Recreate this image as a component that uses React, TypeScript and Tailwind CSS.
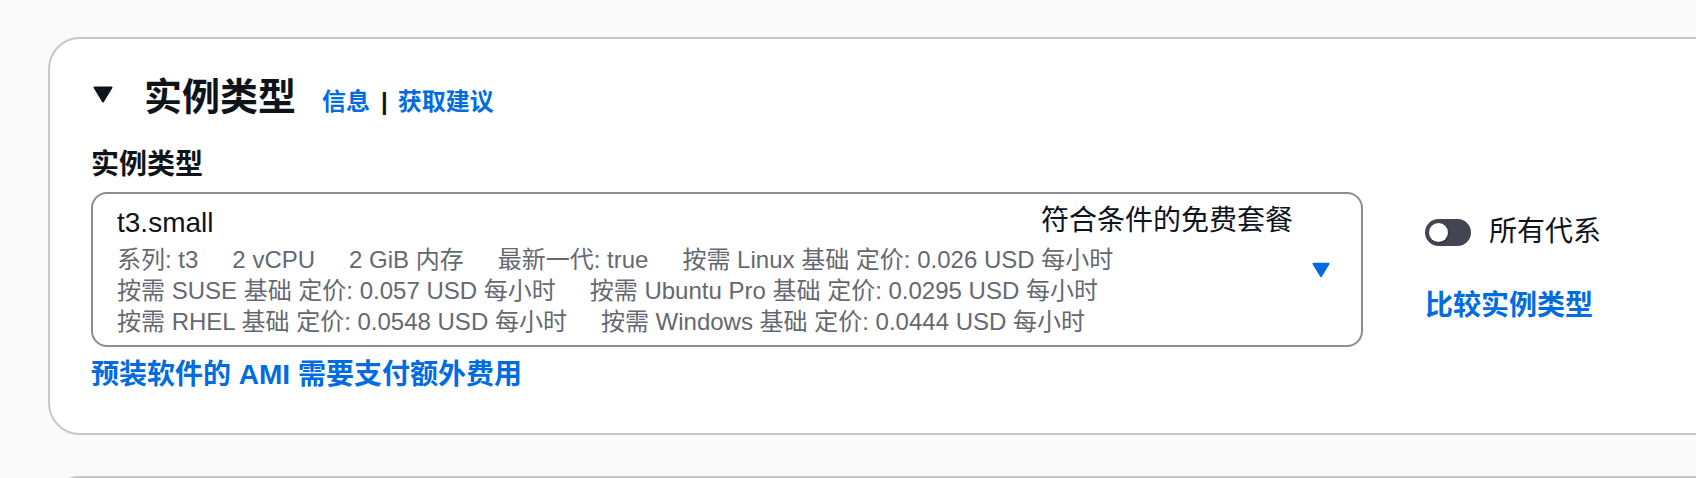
import React from "react";

const Caret = ({ className }: { className?: string }) => (
  <svg viewBox="0 0 20 17" className={className} aria-hidden="true">
    <path d="M1.5 1.5 L18.5 1.5 L10 15.5 Z" fill="currentColor" stroke="currentColor" strokeWidth="2" strokeLinejoin="round" />
  </svg>
);

export default function App() {
  const line1 = ["系列: t3", "2 vCPU", "2 GiB 内存", "最新一代: true", "按需 Linux 基础 定价: 0.026 USD 每小时"];
  const line2 = ["按需 SUSE 基础 定价: 0.057 USD 每小时", "按需 Ubuntu Pro 基础 定价: 0.0295 USD 每小时"];
  const line3 = ["按需 RHEL 基础 定价: 0.0548 USD 每小时", "按需 Windows 基础 定价: 0.0444 USD 每小时"];
  return (
    <div className="h-[478px] w-[1696px] overflow-hidden bg-[#fafafa] pl-[48px] pt-[37px] font-['Liberation_Sans','Noto_Sans_CJK_SC',sans-serif] text-[#0f141a]">
      <div className="w-[1700px] rounded-[32px] border-2 border-[#c6c6cd] bg-white pb-[38px] pl-[41px] pt-[34px]">
        <div className="flex h-[48px] items-center">
          <Caret className="mb-[6px] ml-[2px] h-[17px] w-[20px] text-[#0f141a]" />
          <div className="ml-[31px] flex items-baseline">
            <h2 className="text-[38px] font-bold leading-[48px]">实例类型</h2>
            <span className="ml-[26px] text-[24px] font-bold text-[#006ce0]">信息</span>
            <span className="ml-[11px] text-[24px] font-bold text-[#0f141a]">|</span>
            <span className="ml-[10px] text-[24px] font-bold text-[#006ce0]">获取建议</span>
          </div>
        </div>
        <div className="mt-[24px] text-[28px] font-bold leading-[40px]">实例类型</div>
        <div className="mt-[7px] flex gap-[62px]">
          <div className="w-[1272px]">
            <div className="flex items-center rounded-[16px] border-2 border-[#8c8c94] pb-[8px] pl-[24px] pr-[31px] pt-[8px]">
              <div className="min-w-0 flex-1">
                <div className="flex items-start justify-between">
                  <span className="text-[28px] leading-[42px]">t3.small</span>
                  <span className="text-[28px] leading-[38px]">符合条件的免费套餐</span>
                </div>
                {[line1, line2, line3].map((row, i) => (
                  <div key={i} className="flex gap-x-[34px] text-[24px] leading-[31px] text-[#656871]">
                    {row.map((t) => (
                      <span key={t} className="whitespace-pre">{t}</span>
                    ))}
                  </div>
                ))}
              </div>
              <Caret className="ml-[19px] h-[16px] w-[18px] text-[#006ce0]" />
            </div>
            <div className="mt-[8px] text-[28px] font-bold leading-[40px] text-[#006ce0]">
              预装软件的 AMI 需要支付额外费用
            </div>
          </div>
          <div className="pt-[20px]">
            <div className="flex h-[40px] items-center">
              <div className="flex h-[27px] w-[46px] items-center rounded-full bg-[#424650] pl-[4px]">
                <div className="h-[19px] w-[19px] rounded-full bg-white shadow-[1px_1px_2px_rgba(0,0,0,0.35)]" />
              </div>
              <span className="ml-[18px] text-[28px] leading-[40px]">所有代系</span>
            </div>
            <div className="mt-[34px] text-[28px] font-bold leading-[40px] text-[#006ce0]">比较实例类型</div>
          </div>
        </div>
      </div>
      <div className="mt-[41px] h-[200px] w-[1700px] rounded-[32px] border-2 border-[#c6c6cd] bg-white" />
    </div>
  );
}
